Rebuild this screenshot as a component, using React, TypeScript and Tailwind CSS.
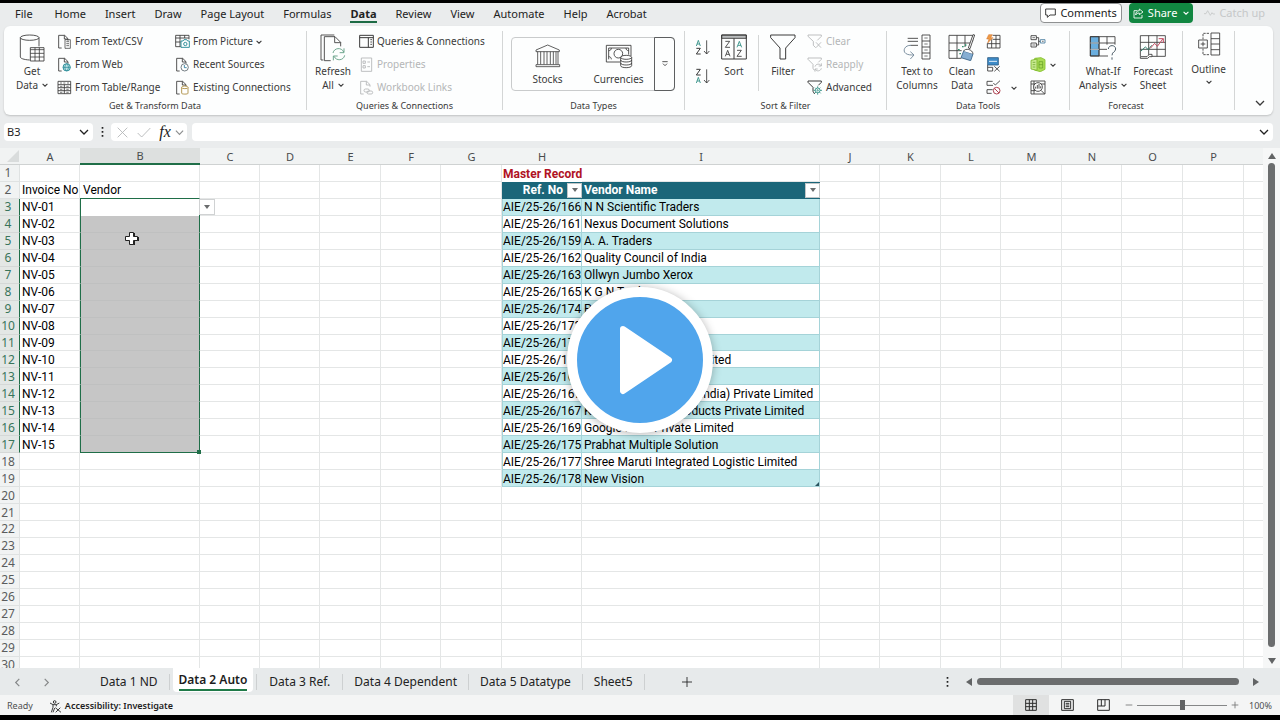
import type { ReactNode } from "react";

type IconProps = { w: number; h: number; children: ReactNode; className?: string };

/* Icons are drawn on a grid of three units to the pixel. */
function Icon({ w, h, children, className = "" }: IconProps) {
  return (
    <svg
      width={w}
      height={h}
      viewBox={`0 0 ${w * 3} ${h * 3}`}
      fill="none"
      stroke="currentColor"
      strokeWidth="2.6"
      strokeLinejoin="round"
      className={`shrink-0 ${className}`}
      aria-hidden="true"
    >
      {children}
    </svg>
  );
}

function Chevron({ size = 6, className = "" }: { size?: number; className?: string }) {
  return (
    <svg
      width={size}
      height={size}
      viewBox="0 0 10 10"
      fill="none"
      stroke="currentColor"
      strokeWidth={size > 6 ? 1.3 : 1.8}
      className={`inline-block shrink-0 ${className}`}
      aria-hidden="true"
    >
      <path d="M1 3l4 4 4-4" />
    </svg>
  );
}

const DocOutline = () => <path d="M14 42H5V4h18l10 10v6M22 4v11h11" />;

const icons = {
  database: (
    <Icon w={26} h={28}>
      <path d="M4 11v58c0 4 10 8 28 9M60 11v26" />
      <ellipse cx="32" cy="11" rx="28" ry="8" />
      <path d="M34 41h41v40H34z" fill="#fff" />
      <path d="M34 47h41M34 58h41M34 69h41M48 41v40M61 41v40" strokeWidth="2.4" />
    </Icon>
  ),
  textFile: (
    <Icon w={15} h={15}>
      <DocOutline />
      <path d="M24 17h16v26H24zM28 23h8M28 29h8M28 35h8" strokeWidth="2.2" />
    </Icon>
  ),
  webFile: (
    <Icon w={15} h={15}>
      <DocOutline />
      <circle cx="29" cy="31" r="11" fill="#bfe3e6" stroke="#16828f" />
      <path d="M18 31h22M29 20c-7 7-7 15 0 22M29 20c7 7 7 15 0 22" stroke="#16828f" strokeWidth="2" />
    </Icon>
  ),
  tableRange: (
    <Icon w={15} h={15}>
      <path d="M3 4h38v37H3zM3 14h38M3 23h38M3 32h38M22 14v27" />
      <path d="M9 9h6M19 9h6M30 9h6M9 19h7M28 19h7M9 28h7M28 28h7M9 37h7M28 37h7" strokeWidth="2" />
    </Icon>
  ),
  pictureTable: (
    <Icon w={15} h={15}>
      <path d="M17 38H2V4h40v12M2 12h40M2 24h14M15 4v34M29 4v8" />
      <path d="M18 21h6l3-4h8l3 4h5v19H18z" fill="#fff" stroke="#16828f" />
      <circle cx="31" cy="30" r="5" stroke="#16828f" />
    </Icon>
  ),
  recentFile: (
    <Icon w={15} h={15}>
      <DocOutline />
      <circle cx="29" cy="31" r="11" fill="#fff" stroke="#5f6b70" />
      <path d="M28 24v8h7" stroke="#2b7a9b" />
    </Icon>
  ),
  connectionFile: (
    <Icon w={15} h={15}>
      <DocOutline />
      <path d="M20 22v18c0 3 19 3 19 0V22" fill="#fff" stroke="#a8893a" />
      <ellipse cx="29.500" cy="22" rx="9.500" ry="4" fill="#fff" stroke="#a8893a" />
    </Icon>
  ),
  refresh: (
    <Icon w={26} h={28}>
      <path d="M10 78H3V3h40M32 80H13V8h32l17 17v12M44 8v18h18" />
      <path d="M39 57c3-16 26-18 32-3M72 43v13H59M74 64c-3 16-25 18-32 3M40 79V66h13" stroke="#5c9a80" />
    </Icon>
  ),
  queries: (
    <Icon w={15} h={15}>
      <path d="M2 4h41v36H2zM2 11h41M28 11v29" strokeWidth="3" />
      <path d="M34 17h5M34 24h5M34 31h5" />
    </Icon>
  ),
  properties: (
    <Icon w={15} h={15}>
      <path d="M7 3h31v40H7zM12 12h7v7h-7zM12 26h7v7h-7zM25 15h8M25 29h8" />
    </Icon>
  ),
  workbookLinks: (
    <Icon w={15} h={15}>
      <DocOutline />
      <rect x="15" y="27" width="16" height="9" rx="4.500" />
      <rect x="24" y="33" width="17" height="9" rx="4.500" />
    </Icon>
  ),
  bank: (
    <Icon w={26} h={24}>
      <path d="M3 23v-5L38 3l35 15v5zM8 23v38M17 23v38M27 23v38M36 23v38M46 23v38M55 23v38M63 23v38M69 23v38M3 62h71v6H3z" strokeWidth="2.4" />
    </Icon>
  ),
  money: (
    <Icon w={28} h={25}>
      <path d="M45 54H4V4h74v32M11 46V12h60v20" />
      <circle cx="40" cy="29" r="13" />
      <path d="M11 20c5 0 8-3 8-8M11 38c5 0 8 3 8 8M63 12c0 5 3 8 8 8" />
      <path d="M47 40v25c0 8 33 8 33 0V40" fill="#fff" />
      <ellipse cx="63.500" cy="40" rx="16.500" ry="6" fill="#fff" />
      <path d="M47 48c0 8 33 8 33 0M47 57c0 8 33 8 33 0" />
    </Icon>
  ),
  sort: (
    <Icon w={26} h={26}>
      <path d="M2 3h74v10H2z" fill="#b9bcbd" />
      <path d="M2 3h74v72H2zM39 13v62" strokeWidth="3" />
      <path d="M13 22h13L13 40h14M48 49h13L48 67h14M13 67l7-18 7 18M16 61h9" />
      <path d="M48 40l7-18 7 18M51 34h9" stroke="#2f8f84" />
    </Icon>
  ),
  sortAsc: (
    <Icon w={16} h={17}>
      <path d="M4 21l6-17 6 17M6 15h8" stroke="#2f8f84" />
      <path d="M4 28h12L4 45h13" strokeWidth="3" />
      <path d="M35 4v41M27 36l8 9 8-9" />
    </Icon>
  ),
  sortDesc: (
    <Icon w={16} h={17}>
      <path d="M4 4h12L4 21h13" strokeWidth="3" />
      <path d="M4 45l6-17 6 17M6 39h8" stroke="#2f8f84" />
      <path d="M35 4v41M27 36l8 9 8-9" />
    </Icon>
  ),
  filter: (
    <Icon w={26} h={26}>
      <path d="M2 3h73v8L47 42v33H30V42L2 11z" strokeWidth="3" />
    </Icon>
  ),
  clearFilter: (
    <Icon w={16} h={15}>
      <path d="M26 41l-7-7V22L3 7V3h40v4L31 19M27 25l15 16M42 25L27 41" />
    </Icon>
  ),
  reapplyFilter: (
    <Icon w={16} h={15}>
      <path d="M22 40l-4-6V22L3 7V3h40v4l-9 9" />
      <path d="M24 29c2-9 15-10 18-3M43 19v8h-8M43 34c-2 9-15 10-18 3M24 44v-8h8" />
    </Icon>
  ),
  advancedFilter: (
    <Icon w={16} h={15}>
      <path d="M23 42l-5-8V22L3 7V3h40v4l-9 9" strokeWidth="3" />
      <g stroke="#2f8f84">
        <circle cx="32" cy="31" r="7" />
        <circle cx="32" cy="31" r="2" />
        <path d="M32 19v5M32 38v6M20 31h5M39 31h6M24 23l3 3M37 36l4 4M40 23l-3 3M27 36l-4 4" />
      </g>
    </Icon>
  ),
  textToColumns: (
    <Icon w={28} h={26}>
      <path d="M14 13h31M14 22h31M23 34h22" />
      <path d="M24 34C5 33-2 51 8 58c6 5 16 5 23 5M22 53l11 10-11 12" stroke="#6a7f92" />
      <path d="M57 3h24v72H57zM57 21h24M57 39h24M57 57h24" />
      <path d="M64 12h10M64 30h10M64 48h10M64 66h10" strokeWidth="2" />
    </Icon>
  ),
  cleanData: (
    <Icon w={28} h={27}>
      <path d="M40 73H3V4h71v18M3 27h64M3 50h38M27 4v69M51 4v35" />
      <path d="M80 3L66 44l-5-2L75 2z" fill="#fff" />
      <path d="M47 51l28 9-7 20-29-9z" fill="#85aed2" stroke="#3a6488" />
      <path d="M47 51c4-9 27-6 28 9" fill="#fff" />
      <path d="M30 47h5M42 38h5M34 59h5M53 31v5" stroke="#32936f" strokeWidth="4" />
    </Icon>
  ),
  flashFill: (
    <Icon w={15} h={15}>
      <path d="M20 4h22v38H4V28M4 29h38M20 16h22M17 16v26M30 4v38" />
      <path d="M8 2h11l-5 9h7L5 27l4-12H2z" fill="#ee9a45" stroke="#d0702a" strokeWidth="1.500" />
    </Icon>
  ),
  removeDuplicates: (
    <Icon w={15} h={15}>
      <path d="M5 2h32v22H5z" fill="#3f8cc8" stroke="#2f5f86" />
      <path d="M9 13h24" stroke="#fff" />
      <path d="M5 24v18h15V31H5M25 28l16 15M41 28L25 43" />
    </Icon>
  ),
  validation: (
    <Icon w={15} h={15}>
      <path d="M20 4H3v12h18M20 29H3v11h14M22 9l6 6L42 2" />
      <circle cx="32" cy="32" r="10" stroke="#b04452" strokeWidth="3" />
      <path d="M25 25l14 14" stroke="#b04452" strokeWidth="3" />
    </Icon>
  ),
  consolidate: (
    <Icon w={16} h={15}>
      <path d="M3 5h16v12H3zM3 27h16v12H3z" />
      <path d="M19 11h7v22h-7M26 22h5" />
      <path d="M31 17h14v10H31z" stroke="#477c9f" />
      <path d="M7 11h8M7 33h8M36 22h5" strokeWidth="2" />
    </Icon>
  ),
  dataModel: (
    <Icon w={16} h={15}>
      <path d="M14 4l19-2 12 6v29l-14 7-18-5z" fill="#a9dc55" stroke="#86c22e" />
      <path d="M3 10l18-4v34L3 36z" fill="#c8ea8f" stroke="#7bb52a" />
      <path d="M8 16h8M8 23h8M8 30h8M27 14h11v19H27zM27 23h11" stroke="#5f9a22" strokeWidth="2" />
    </Icon>
  ),
  dataSearch: (
    <Icon w={16} h={15}>
      <path d="M3 3h42v39H3zM3 12h42M3 32h12M12 3v39" />
      <circle cx="24" cy="21" r="13" fill="#fff" />
      <path d="M33 31l11 11M17 26v-6M22 26V15M27 26V12M32 25v-6" />
    </Icon>
  ),
  whatIf: (
    <Icon w={28} h={26}>
      <path d="M4 8h26v58H4z" fill="#6aaede" />
      <path d="M57 66H4V8h74v24M4 27h74M4 46h50M30 8v58M54 8v24" />
      <path d="M4 27h26M4 46h26" stroke="#fff" strokeWidth="2" />
      <path d="M58 45c1-14 22-13 22 0 0 9-11 8-11 19M69 70v7" stroke="#4b5b66" strokeWidth="3" />
    </Icon>
  ),
  forecast: (
    <Icon w={28} h={26}>
      <path d="M4 67V5h75v62H38M4 25h75M4 46h75M29 5v62M54 5v62" />
      <path d="M4 68h20l7-7h8v7h-8l-5 5H4z" fill="#fff" />
      <path d="M5 52l14-13 9 8 10-13" stroke="#31806e" strokeWidth="3" />
      <path d="M34 43l13-15 8 9 17-23M59 14h14v13" stroke="#c34b62" strokeWidth="3" />
    </Icon>
  ),
  outline: (
    <Icon w={24} h={24}>
      <path d="M42 3h26v66H42zM42 20h26M42 36h26M42 53h26" />
      <path d="M36 4H18v18M36 68H18V50" strokeDasharray="7 3" />
      <path d="M5 24h26v24H5zM18 29v14M11 36h14" />
    </Icon>
  ),
};

function BigButton({
  icon,
  lines,
  chevron = false,
  className = "w-12",
}: {
  icon: ReactNode;
  lines: string[];
  chevron?: boolean;
  className?: string;
}) {
  return (
    <button className={`flex shrink-0 flex-col items-center pt-1 ${className}`}>
      <span className="mb-0.5 flex h-7 items-start">{icon}</span>
      {lines.map((line, i) => (
        <span key={line} className="flex items-center gap-1 whitespace-nowrap leading-[14px]">
          {line}
          {chevron && i === lines.length - 1 && <Chevron />}
        </span>
      ))}
    </button>
  );
}

function SmallButton({
  icon,
  label,
  chevron = false,
  disabled = false,
}: {
  icon: ReactNode;
  label: string;
  chevron?: boolean;
  disabled?: boolean;
}) {
  return (
    <button
      disabled={disabled}
      className="flex h-[23px] items-center gap-[3px] whitespace-nowrap disabled:text-[#b4b6b7]"
    >
      {icon}
      {label}
      {chevron && <Chevron />}
    </button>
  );
}

function Group({ label, className, children }: { label?: string; className: string; children: ReactNode }) {
  return (
    <section className={`flex shrink-0 flex-col pt-1 ${className}`} aria-label={label}>
      <div className="flex h-[69px]">{children}</div>
      <div className="text-center text-[9px] leading-[14px]">{label}</div>
    </section>
  );
}

const Divider = () => <div className="my-[5px] w-px shrink-0 bg-[#d4d6d6]" />;

const menuTabs = [
  "Home",
  "Insert",
  "Draw",
  "Page Layout",
  "Formulas",
  "Data",
  "Review",
  "View",
  "Automate",
  "Help",
  "Acrobat",
];

function MenuBar() {
  return (
    <header className="flex h-[23px] shrink-0 items-start pl-1.5 pr-[11px] text-[11px]">
      <nav className="flex gap-px">
        <button className="h-5 whitespace-nowrap pl-[9px] pr-3 leading-[21px]">File</button>
        {menuTabs.map((tab) => (
          <button key={tab} className="whitespace-nowrap px-[9px]">
            <span
              className={
                tab === "Data"
                  ? "block h-5 border-b-2 border-[#1d6b45] font-bold leading-[21px]"
                  : "block h-5 leading-[21px]"
              }
            >
              {tab}
            </span>
          </button>
        ))}
      </nav>
      <div className="ml-auto flex h-5 gap-[7px]">
        <button className="flex items-center gap-1 rounded border border-[#8f9192] bg-white px-1">
          <Icon w={11} h={10}>
            <path d="M2 3h29v18H15l-8 7v-7H2z" />
          </Icon>
          Comments
        </button>
        <button className="flex items-center gap-1 rounded bg-[#118641] px-1 text-white">
          <Icon w={11} h={11}>
            <path d="M13 8H3v22h24v-9M19 3l11 9-11 8v-5c-6 0-9 2-11 6 0-8 4-13 11-13z" />
          </Icon>
          Share
          <Chevron className="ml-0.5" />
        </button>
        <button disabled className="flex items-center gap-1 px-1 text-[#c6c8c9]">
          <Icon w={11} h={8}>
            <path d="M0 14h6l5-9 8 14 5-8 3 4h6" />
          </Icon>
          Catch up
        </button>
      </div>
    </header>
  );
}

function Ribbon() {
  return (
    <div className="ml-1 mr-[7px] flex h-[89px] shrink-0 rounded-md bg-[#fdfefe] text-[10px] text-[#3a3a3a] shadow-[0_1px_2px_rgba(0,0,0,0.18)]">
      <Group label="Get & Transform Data" className="w-[302px]">
        <BigButton icon={icons.database} lines={["Get", "Data"]} chevron className="ml-1 w-12" />
        <div className="ml-px w-[118px]">
          <SmallButton icon={icons.textFile} label="From Text/CSV" />
          <SmallButton icon={icons.webFile} label="From Web" />
          <SmallButton icon={icons.tableRange} label="From Table/Range" />
        </div>
        <div>
          <SmallButton icon={icons.pictureTable} label="From Picture" chevron />
          <SmallButton icon={icons.recentFile} label="Recent Sources" />
          <SmallButton icon={icons.connectionFile} label="Existing Connections" />
        </div>
      </Group>
      <Divider />
      <Group label="Queries & Connections" className="w-[195px]">
        <BigButton icon={icons.refresh} lines={["Refresh", "All"]} chevron className="ml-0.5 w-12" />
        <div className="ml-0.5">
          <SmallButton icon={icons.queries} label="Queries & Connections" />
          <SmallButton icon={icons.properties} label="Properties" disabled />
          <SmallButton icon={icons.workbookLinks} label="Workbook Links" disabled />
        </div>
      </Group>
      <Divider />
      <Group label="Data Types" className="w-[181px]">
        <div className="ml-2 mt-[7px] flex h-[54px] w-[164px] rounded border border-[#c9cbcc]">
          <button className="flex w-[71px] flex-col items-center justify-between pb-1 pt-1.5">
            {icons.bank}
            <span className="leading-[14px]">Stocks</span>
          </button>
          <button className="flex w-[71px] flex-col items-center justify-between pb-1 pt-1.5">
            {icons.money}
            <span className="leading-[14px]">Currencies</span>
          </button>
          <button
            aria-label="More data types"
            className="-my-px -mr-px flex flex-1 items-center justify-center rounded-r border border-[#5d5f60]"
          >
            <Icon w={6} h={6}>
              <path d="M1 2h16M3 8l6 6 6-6" />
            </Icon>
          </button>
        </div>
      </Group>
      <Divider />
      <Group label="Sort & Filter" className="w-[201px]">
        <div className="ml-[10px] flex flex-col gap-3 pt-[9px]">
          <button aria-label="Sort A to Z">{icons.sortAsc}</button>
          <button aria-label="Sort Z to A">{icons.sortDesc}</button>
        </div>
        <BigButton icon={icons.sort} lines={["Sort"]} className="ml-[3px] w-10" />
        <div className="mb-2 ml-1 mt-[5px] w-px bg-[#d4d6d6]" />
        <BigButton icon={icons.filter} lines={["Filter"]} className="ml-1 w-10" />
        <div className="ml-1">
          <SmallButton icon={icons.clearFilter} label="Clear" disabled />
          <SmallButton icon={icons.reapplyFilter} label="Reapply" disabled />
          <SmallButton icon={icons.advancedFilter} label="Advanced" />
        </div>
      </Group>
      <Divider />
      <Group label="Data Tools" className="w-[182px]">
        <BigButton icon={icons.textToColumns} lines={["Text to", "Columns"]} className="ml-[5px] w-[50px]" />
        <BigButton icon={icons.cleanData} lines={["Clean", "Data"]} className="w-10" />
        <div className="ml-1 flex w-11 flex-col">
          <button aria-label="Flash Fill" className="flex h-[23px] items-center">
            {icons.flashFill}
          </button>
          <button aria-label="Remove Duplicates" className="flex h-[23px] items-center">
            {icons.removeDuplicates}
          </button>
          <button aria-label="Data Validation" className="flex h-[23px] items-center gap-[10px]">
            {icons.validation}
            <Chevron />
          </button>
        </div>
        <div className="flex flex-col">
          <button aria-label="Consolidate" className="flex h-[23px] items-center">
            {icons.consolidate}
          </button>
          <button aria-label="Data Model" className="flex h-[23px] items-center gap-1">
            {icons.dataModel}
            <Chevron />
          </button>
          <button aria-label="Relationships" className="flex h-[23px] items-center">
            {icons.dataSearch}
          </button>
        </div>
      </Group>
      <Divider />
      <Group label="Forecast" className="w-[112px]">
        <BigButton icon={icons.whatIf} lines={["What-If", "Analysis"]} chevron className="ml-2 w-[50px]" />
        <BigButton icon={icons.forecast} lines={["Forecast", "Sheet"]} className="w-[50px]" />
      </Group>
      <Divider />
      <Group className="w-[51px]">
        <button className="flex w-full flex-col items-center pt-0.5">
          {icons.outline}
          <span className="mt-1.5 leading-[14px]">Outline</span>
          <Chevron className="mt-[3px]" />
        </button>
      </Group>
      <Divider />
      <button aria-label="Collapse ribbon" className="mb-[5px] ml-auto mr-2 self-end">
        <Chevron size={10} />
      </button>
    </div>
  );
}

function FormulaBar() {
  return (
    <div className="mb-[7px] ml-1 mr-[7px] mt-2 flex h-[18px] shrink-0 items-stretch text-[11px]">
      <div className="flex w-[89px] items-center rounded bg-white pr-1">
        <input aria-label="Name box" defaultValue="B3" className="min-w-0 flex-1 bg-transparent pl-[3px] outline-none" />
        <Chevron size={10} />
      </div>
      <div className="flex w-[18px] items-center justify-center">
        <Icon w={3} h={12}>
          <path d="M2 3h5v5H2zM2 15h5v5H2zM2 27h5v5H2z" fill="currentColor" stroke="none" />
        </Icon>
      </div>
      <div className="flex w-[76px] items-center rounded bg-white">
        <button aria-label="Cancel" className="flex w-[22px] justify-center text-[#b3b5b6]">
          <Icon w={11} h={11}>
            <path d="M2 2l29 29M31 2L2 31" />
          </Icon>
        </button>
        <button aria-label="Enter" className="flex w-[22px] justify-center text-[#b3b5b6]">
          <Icon w={14} h={11}>
            <path d="M2 18l12 12L40 3" />
          </Icon>
        </button>
        <button
          aria-label="Insert function"
          className="w-5 font-['Liberation_Serif',serif] text-[16px] italic leading-4"
        >
          fx
        </button>
        <Chevron size={9} className="text-[#8d8f90]" />
      </div>
      <div className="ml-[5px] flex flex-1 items-center rounded bg-white pr-1">
        <input aria-label="Formula bar" className="min-w-0 flex-1 bg-transparent outline-none" />
        <Chevron size={10} />
      </div>
    </div>
  );
}

const columns = "ABCDEFGHIJKLMNOP".split("");

const vendors: [string, string][] = [
  ["166", "N N Scientific Traders"],
  ["161", "Nexus Document Solutions"],
  ["159", "A. A. Traders"],
  ["162", "Quality Council of India"],
  ["163", "Ollwyn Jumbo Xerox"],
  ["165", "K G N Traders"],
  ["174", "P K Traders"],
  ["173", ""],
  ["172", ""],
  ["170", "Bharat Pack Private Limited"],
  ["168", ""],
  ["167", "Thermo Instruments (India) Private Limited"],
  ["167", "Krishna Packing Products Private Limited"],
  ["169", "Google India Private Limited"],
  ["175", "Prabhat Multiple Solution"],
  ["177", "Shree Maruti Integrated Logistic Limited"],
  ["178", "New Vision"],
];

function DropArrow() {
  return (
    <svg width="6" height="4" viewBox="0 0 6 4" aria-hidden="true">
      <path d="M0 0h6L3 4z" fill="#6a6c6d" />
    </svg>
  );
}

function FilterButton({ label }: { label: string }) {
  return (
    <button
      aria-label={label}
      className="flex h-[15px] w-[15px] shrink-0 items-center justify-center border border-[#c2c6c7] bg-white"
    >
      <DropArrow />
    </button>
  );
}

function cellContent(column: string, row: number): ReactNode {
  const record = row >= 3 && row <= 19 ? vendors[row - 3] : undefined;
  if (column === "A") {
    if (row === 2) return "Invoice No";
    if (row >= 3 && row <= 17) return `NV-${String(row - 2).padStart(2, "0")}`;
  }
  if (column === "B" && row === 2) return "Vendor";
  if (column === "C" && row === 3) {
    return (
      <div className="relative">
        <button
          aria-label="Choose vendor"
          className="absolute -left-0.5 -top-2 flex h-4 w-4 items-center justify-center border border-[#d0d2d3] bg-white"
        >
          <DropArrow />
        </button>
      </div>
    );
  }
  if (column === "H") {
    if (row === 1) return "Master Record";
    if (row === 2)
      return (
        <div className="flex items-center justify-end gap-1">
          Ref. No
          <FilterButton label="Filter by reference" />
        </div>
      );
    if (record) return `AIE/25-26/${record[0]}`;
  }
  if (column === "I") {
    if (row === 2)
      return (
        <div className="flex items-center justify-between">
          Vendor Name
          <FilterButton label="Filter by vendor name" />
        </div>
      );
    if (record) return record[1];
  }
  return null;
}

const plainCell = "border-b border-r border-[#e4e6e6] bg-white pt-px";

function cellClass(column: string, row: number): string {
  if (column === "B") {
    if (row === 2)
      return "border-b border-r border-b-[#1f6e48] border-r-[#e4e6e6] bg-white pl-[3px] pt-px";
    if (row === 3) return "border-x border-x-[#1f6e48] bg-white";
    if (row > 3 && row < 17)
      return "border-x border-b border-x-[#1f6e48] border-b-[#bfc0c0] bg-[#c6c6c6]";
    if (row === 17) return "relative border-x border-b border-[#1f6e48] bg-[#c6c6c6]";
  }
  if (column === "H") {
    if (row === 1) return "bg-white pl-px pt-px font-bold text-[#b01224]";
    if (row === 2) return "bg-[#1b6679] font-bold text-white";
    if (row >= 3 && row <= 19)
      return row % 2
        ? "border-x border-b border-[#a5d3d8] bg-[#c1eaed] pt-px"
        : "border-x border-b border-[#a5d3d8] bg-white pt-px";
  }
  if (column === "I") {
    if (row === 2) return "bg-[#1b6679] pl-0.5 font-bold text-white";
    if (row >= 3 && row <= 19)
      return row % 2
        ? "relative border-b border-r border-[#a5d3d8] bg-[#c1eaed] pl-0.5 pt-px"
        : "border-b border-r border-[#a5d3d8] bg-white pl-0.5 pt-px";
  }
  if (column === "A") return `${plainCell} pl-0.5`;
  return `${plainCell} pl-px`;
}

function Sheet() {
  return (
    <main className="flex min-h-0 flex-1">
      <div className="min-w-0 flex-1 overflow-hidden bg-[#f1f3f3]">
        <table className="h-[526px] w-full table-fixed border-separate border-spacing-0 font-['Roboto',sans-serif] text-[12px] leading-[14px] text-black">
          <colgroup>
            <col className="w-5" />
            <col className="w-[60px]" />
            <col className="w-[120px]" />
            <col className="w-[60px]" />
            <col className="w-[60px]" />
            <col className="w-[61px]" />
            <col className="w-[60px]" />
            <col className="w-[61px]" />
            <col className="w-[80px]" />
            <col className="w-[238px]" />
            <col className="w-[60px]" />
            <col className="w-[61px]" />
            <col className="w-[60px]" />
            <col className="w-[61px]" />
            <col className="w-[60px]" />
            <col className="w-[61px]" />
            <col className="w-[61px]" />
            <col />
          </colgroup>
          <thead className="font-['Noto_Sans',sans-serif] text-[11px] text-[#4a4c4d]">
            <tr className="h-[17px]">
              <th className="border-b border-[#cfd2d2]">
                <svg width="12" height="12" viewBox="0 0 12 12" className="ml-auto mr-px" aria-hidden="true">
                  <path d="M12 0v12H0z" fill="#d9dcdc" />
                </svg>
              </th>
              {columns.map((column) => (
                <th
                  key={column}
                  scope="col"
                  className={
                    column === "B"
                      ? "border-b-2 border-[#1f6e48] bg-[#dde0df] pt-px font-normal"
                      : "border-b border-[#cfd2d2] pt-px font-normal"
                  }
                >
                  {column}
                </th>
              ))}
              <th className="border-b border-[#cfd2d2]" />
            </tr>
          </thead>
          <tbody>
            {Array.from({ length: 30 }, (_, i) => i + 1).map((row) => (
              <tr key={row}>
                <th
                  scope="row"
                  className={
                    row >= 3 && row <= 17
                      ? "border-b border-r border-b-[#d5d8d7] border-r-[#1f6e48] bg-[#e3e7e5] pr-[3px] pt-px font-['Noto_Sans',sans-serif] font-normal text-[#39745a]"
                      : "border-b border-r border-[#dfe2e2] bg-[#f1f3f3] pr-[3px] pt-px font-['Noto_Sans',sans-serif] font-normal text-[#5a5c5d]"
                  }
                >
                  {row}
                </th>
                {columns.map((column) => (
                  <td key={column} className={`whitespace-nowrap ${cellClass(column, row)}`}>
                    {cellContent(column, row)}
                    {column === "B" && row === 17 && (
                      <span className="absolute -bottom-0.5 -right-0.5 h-1 w-1 bg-[#1f6e48]" />
                    )}
                    {column === "I" && row === 19 && (
                      <svg width="4" height="4" viewBox="0 0 4 4" className="absolute bottom-0 right-0" aria-hidden="true">
                        <path d="M4 0v4H0z" fill="#2a5560" />
                      </svg>
                    )}
                  </td>
                ))}
                <td className="border-b border-[#e4e6e6] bg-white" />
              </tr>
            ))}
          </tbody>
        </table>
      </div>
      <div className="flex w-[17px] flex-col items-center bg-[#f6f7f7] pb-1 pt-[5px]">
        <svg width="8" height="6" viewBox="0 0 8 6" aria-hidden="true">
          <path d="M4 0l4 6H0z" fill="#626465" />
        </svg>
        <div className="mt-1 w-[7px] flex-1 rounded-full bg-[#6b6d6e]" />
        <svg width="8" height="6" viewBox="0 0 8 6" className="mt-[11px]" aria-hidden="true">
          <path d="M0 0h8L4 6z" fill="#626465" />
        </svg>
      </div>
    </main>
  );
}

function SheetTabs() {
  return (
    <div className="flex h-[27px] shrink-0 items-stretch bg-[#e7eaeb] text-[12px] text-[#222]">
      <div className="flex w-[89px] items-center gap-5 pl-[13px] text-[#858788]">
        <button aria-label="Previous sheet">
          <Chevron size={9} className="rotate-90" />
        </button>
        <button aria-label="Next sheet">
          <Chevron size={9} className="-rotate-90" />
        </button>
      </div>
      <div className="flex h-[27px] items-center">
        <button className="border-r border-[#cdd0d1] px-[11px] leading-4">Data 1 ND</button>
        <button className="mx-[3px] h-6 self-start rounded-b bg-white px-1.5 font-semibold text-[#1c1c1c]">
          <span className="block border-b-2 border-[#1f7a48] leading-[19px]">Data 2 Auto</span>
        </button>
        <button className="border-x border-[#cdd0d1] px-3 leading-4">Data 3 Ref.</button>
        <button className="border-r border-[#cdd0d1] px-[11px] leading-4">Data 4 Dependent</button>
        <button className="border-r border-[#cdd0d1] px-[11px] leading-4">Data 5 Datatype</button>
        <button className="border-r border-[#cdd0d1] px-[11px] leading-4">Sheet5</button>
        <button aria-label="New sheet" className="ml-9">
          <Icon w={12} h={12}>
            <path d="M18 3v30M3 18h30" />
          </Icon>
        </button>
      </div>
      <div className="ml-auto flex w-[334px] items-center">
        <Icon w={3} h={12}>
          <path d="M2 3h5v5H2zM2 15h5v5H2zM2 27h5v5H2z" fill="currentColor" stroke="none" />
        </Icon>
        <svg width="6" height="8" viewBox="0 0 6 8" className="ml-[17px]" aria-hidden="true">
          <path d="M6 0v8L0 4z" fill="#626465" />
        </svg>
        <div className="ml-[5px] h-[7px] flex-1 rounded-full bg-[#6b6d6e]" />
        <svg width="6" height="8" viewBox="0 0 6 8" className="ml-[14px] mr-[21px]" aria-hidden="true">
          <path d="M0 0v8l6-4z" fill="#626465" />
        </svg>
      </div>
    </div>
  );
}

function StatusBar() {
  return (
    <footer className="flex h-5 shrink-0 items-center bg-[#f4f5f5] pl-[7px] pr-2 text-[9px] text-[#4e5051]">
      <span className="pt-0.5">Ready</span>
      <button className="ml-4 flex items-center gap-[3px] pt-0.5 font-semibold text-[#1f1f1f]">
        <Icon w={13} h={13}>
          <circle cx="17" cy="6" r="4" />
          <path d="M3 9l9 5v8l-5 15M31 9l-9 5v5M12 14h10M17 24l-5 13" />
          <path d="M19 23l17 14M34 23L20 37" />
        </Icon>
        Accessibility: Investigate
      </button>
      <div className="ml-auto flex h-full items-center text-[#2c2c2c]">
        <button aria-label="Normal view" className="flex h-full w-9 items-center justify-center bg-[#e0e1e1]">
          <Icon w={12} h={12}>
            <path d="M2 2h32v32H2zM2 13h32M2 23h32M13 2v32M23 2v32" strokeWidth="3" />
          </Icon>
        </button>
        <button aria-label="Page layout view" className="flex w-9 justify-center">
          <Icon w={13} h={12}>
            <path d="M2 2h35v32H2zM10 7h19v22H10zM14 13h11M14 18h11M14 23h11" strokeWidth="3" />
          </Icon>
        </button>
        <button aria-label="Page break view" className="flex w-9 justify-center">
          <Icon w={13} h={12}>
            <path d="M2 2h35v32H2zM2 21h22V2M13 2v19" strokeWidth="3" />
          </Icon>
        </button>
        <button aria-label="Zoom out" className="ml-1 text-[#77797a]">
          <Icon w={8} h={8}>
            <path d="M2 12h20" />
          </Icon>
        </button>
        <input
          type="range"
          aria-label="Zoom"
          defaultValue={50}
          className="mx-1 h-3 w-[90px] appearance-none bg-transparent [&::-webkit-slider-runnable-track]:h-px [&::-webkit-slider-runnable-track]:bg-[#858788] [&::-webkit-slider-thumb]:-mt-[5px] [&::-webkit-slider-thumb]:h-[10px] [&::-webkit-slider-thumb]:w-[5px] [&::-webkit-slider-thumb]:appearance-none [&::-webkit-slider-thumb]:bg-[#626465]"
        />
        <button aria-label="Zoom in" className="text-[#77797a]">
          <Icon w={8} h={8}>
            <path d="M2 12h20M12 2v20" />
          </Icon>
        </button>
        <span className="ml-2.5 pt-0.5 text-[#4e5051]">100%</span>
      </div>
    </footer>
  );
}

export default function App() {
  return (
    <div className="relative flex h-screen min-h-0 flex-col overflow-hidden border-b-[5px] border-t-[3px] border-black bg-[#eaeced] font-['Noto_Sans',sans-serif] text-[#222]">
      <MenuBar />
      <Ribbon />
      <FormulaBar />
      <Sheet />
      <SheetTabs />
      <StatusBar />

      <svg width="16" height="16" viewBox="0 0 16 16" className="absolute left-[124px] top-[228px]" aria-hidden="true">
        <path d="M6 2h5v4h4v4h-4v4H6v-4H2V6h4z" fill="#222" />
        <path d="M5.500 1.500h4v4h4v4h-4v4h-4v-4h-4v-4h4z" fill="#fff" stroke="#222" />
      </svg>

      <div className="pointer-events-none absolute inset-x-0 -bottom-0.5 top-0 flex items-center justify-center">
        <button
          aria-label="Play video"
          className="pointer-events-auto flex h-[146px] w-[146px] items-center justify-center rounded-full border-[10px] border-white bg-[#50a5ec] shadow-[0_1px_10px_rgba(0,0,0,0.3)]"
        >
          <svg width="126" height="126" viewBox="0 0 126 126" aria-hidden="true">
            <path d="M46 32l46 31-46 31z" fill="#fff" stroke="#fff" strokeWidth="6" strokeLinejoin="round" />
          </svg>
        </button>
      </div>
    </div>
  );
}
